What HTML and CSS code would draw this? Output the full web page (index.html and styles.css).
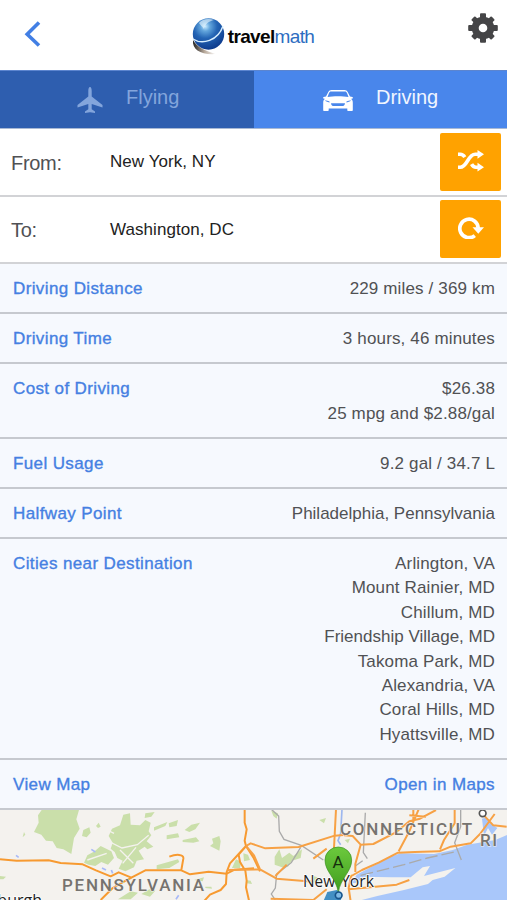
FILE: index.html
```html
<!DOCTYPE html>
<html lang="en">
<head>
<meta charset="utf-8">
<title>Travelmath</title>
<link rel="stylesheet" href="styles.css">
</head>
<body>
<header class="header">
  <svg class="back" viewBox="0 0 18 28"><path d="M15 2.500 3.200 14.200l11.800 11.300" fill="none" stroke="#427fe4" stroke-width="3.600"/></svg>
  <div class="brand">
    <svg class="globe" viewBox="0 0 36 38">
      <defs>
        <radialGradient id="ball" cx=".4" cy=".26" r=".75"><stop offset="0" stop-color="#c5eaff"/><stop offset=".2" stop-color="#62a5dc"/><stop offset=".5" stop-color="#2465b5"/><stop offset="1" stop-color="#0d3a8c"/></radialGradient>
        <linearGradient id="shade"><stop offset="0" stop-color="#222"/><stop offset=".5" stop-color="#b8a99a"/><stop offset="1" stop-color="#fff"/></linearGradient>
      </defs>
      <path d="M2 23C1 33 10 38 25 37 14 34 6 30 2 23Z" fill="url(#shade)"/>
      <circle cx="17.500" cy="17" r="15.700" fill="url(#ball)"/>
      <path d="M2 22c9 6 25 2 30-13" fill="none" stroke="#d7eeff" stroke-width="1.500"/>
      <path d="M8 6c3-4 10-5 15-3-5 1-9 4-10 9-2-3-4-4-5-6Z" fill="#eefaff" opacity=".6"/>
    </svg>
    <span class="name"><b>travel</b>math</span>
  </div>
  <svg class="gear" viewBox="-15 -15 30 30">
    <g fill="#454547"><circle r="11.300"/>
      <rect x="-3" y="-14.800" width="6" height="29.600" rx="1"/><rect x="-14.800" y="-3" width="29.600" height="6" rx="1"/>
      <g transform="rotate(45)"><rect x="-2.700" y="-14.200" width="5.400" height="28.400" rx="1"/><rect x="-14.200" y="-2.700" width="28.400" height="5.400" rx="1"/></g>
    </g><circle r="4.300" fill="#fff"/>
  </svg>
</header>

<nav class="tabs">
  <div class="tab flying">
    <svg class="plane" viewBox="0 0 26 27"><path d="M13 0c1.200 0 1.700 2 1.700 4v5.500L25.500 18v2.400L14.700 17v5.200l3.300 2.300V26l-5-.8L8 26v-1.500l3.300-2.300V17L.5 20.400V18l10.800-8.500V4c0-2 .5-4 1.700-4Z"/></svg>
    <span>Flying</span>
  </div>
  <div class="tab driving">
    <svg class="car" viewBox="0 0 30 21"><path fill="#fff" fill-rule="evenodd" d="M8.500 0h13c1.500 0 2.500.7 3.200 2.100L27 6.500l2.400.5c.8.400.5 1.600-.5 1.700l-.8.100c1.300 1.200 1.700 2.300 1.700 4V20c0 .6-.4 1-1 1h-3.500c-.7 0-1-.4-1-1v-1.400H5.700V20c0 .6-.4 1-1 1H1.200c-.6 0-1-.4-1-1v-7.200c0-1.700.4-2.800 1.700-4l-.8-.1C.1 8.600-.2 7.400.6 7L3 6.500l2.300-4.400C6 .7 7 0 8.500 0ZM8 1.500c-1 0-1.600.6-2 1.500L4.500 7C10 6.100 20 6.100 25.500 7L24 3c-.4-.9-1-1.500-2-1.500ZM1.800 10.500c1.400 1.200 3.100 1.700 5.300 1.800C6 10.800 4 10.100 1.800 10.500Zm26.400 0c-2.200-.4-4.200.3-5.300 1.800 2.200-.1 3.900-.6 5.300-1.800ZM8 13.300c.3 1.800 1 2.600 2 2.600h10c1 0 1.700-.8 2-2.600Z"/></svg>
    <span>Driving</span>
  </div>
</nav>

<section class="trip">
  <div class="place"><span class="key">From:</span><span class="city">New York, NY</span>
    <div class="action"><svg viewBox="0 0 26 22"><g fill="none" stroke="#fff" stroke-width="3.600"><path d="M0 4.200h2.200c2 0 3.600 1.300 4.600 2.900M0 17.200h2.200c7.300 0 7.600-13 15-13H20M13.600 14.200c1 1.900 2.200 3 4.200 3H20"/></g><path fill="#fff" d="M19.500 0 26 4.300l-6.500 4.400ZM19.500 12.700l6.500 4.500-6.500 4.400Z"/></svg></div>
  </div>
  <div class="place"><span class="key">To:</span><span class="city">Washington, DC</span>
    <div class="action"><svg viewBox="0 0 26 22"><path fill="none" stroke="#fff" stroke-width="3.700" d="M16.800 18.600A9.200 9.200 0 1 1 20.200 11"/><path fill="#fff" d="M14.500 10.200H26l-5.700 6.500Z"/></svg></div>
  </div>
</section>

<main class="results">
  <div class="row"><span class="label">Driving Distance</span><span class="value">229 miles / 369 km</span></div>
  <div class="row"><span class="label">Driving Time</span><span class="value">3 hours, 46 minutes</span></div>
  <div class="row"><span class="label">Cost of Driving</span><span class="value">$26.38<br>25 mpg and $2.88/gal</span></div>
  <div class="row"><span class="label">Fuel Usage</span><span class="value">9.2 gal / 34.7 L</span></div>
  <div class="row"><span class="label">Halfway Point</span><span class="value tight">Philadelphia, Pennsylvania</span></div>
  <div class="row"><span class="label">Cities near Destination</span><span class="value">Arlington, VA<br>Mount Rainier, MD<br>Chillum, MD<br><span class="tight">Friendship Village, MD</span><br>Takoma Park, MD<br>Alexandria, VA<br>Coral Hills, MD<br>Hyattsville, MD</span></div>
  <div class="row"><span class="label">View Map</span><span class="label">Open in Maps</span></div>
</main>

<svg class="map" viewBox="0 0 507 90">
  <defs><linearGradient id="pin" x2="0" y2="1"><stop offset="0" stop-color="#6cc93d"/><stop offset="1" stop-color="#3f9d1e"/></linearGradient></defs>
  <rect width="507" height="90" fill="#f4f2ee"/>
  <g transform="translate(0 -70) scale(.33333)">
    <g fill="#cadfaa">
      <path d="M125 210h112l-8 28 10 28-17 28-8 48-24-14-20-4-12-20-20-2-14-18-22-8 14-28-2-22Z"/>
      <path d="m370 224 20-4 2 34 28 2 16-16 16 8-6 26 8 12-14 18 20 16-18 8-8-8-18 12 16 26-22 4-8 20-26 12-20-8 12-24-16-8-8-18-12-10 6-18-12-20 10-22 24-10Z"/>
      <path d="m252 368 10-22 22-12 18-16 32 16 8 20-18 20-20-8-18 12-20-4ZM250 270l18-8 4 16-12 14-14-4ZM288 258l8-10 6 12-8 4ZM436 220l28-4-10 14-20 4ZM462 262l40-16-6 12-34 14ZM506 250l28-10-4 18-22 4ZM500 286l34-6 4 12-38 6ZM554 270l20-16 26-6-14 20-18 8ZM548 300l40-8 10 12-18 4-32-2ZM636 296l22-8 4 16-4 28-28-14 10-8ZM68 292l4-16 4 8ZM470 376l64-18 4 8-30 18-38 4ZM354 478l38-24 22 4-22 20ZM424 462l24-14 18 4-16 18ZM696 384l12-26 16 8-4 18ZM730 340l14 4 6 16-18 4ZM0 408l18 2-8 8H0ZM582 420l30-8-4 12ZM616 440l18 0 2 6-20-2ZM738 420l14 2 4 10-16-2Z"/>
    </g>
    <g fill="none" stroke="#f4f2ee" stroke-width="4"><path d="m318 300 48 24 46-10 34-28M322 270l20 10M368 370l40-48M262 360l58-20M400 370l-40-40"/></g>
    <g fill="none" stroke="#f79a30" stroke-width="6" stroke-linejoin="round">
      <path d="M0 358l50 4 96-1 36 8 66 4 40 18 44 18 24-12 38 16 42-22 108 0 26 12 56-8 54 6 24-12 58-4M508 350c20-8 44-8 42 6l-6 34M302 480l36-36 24-14 34-18"/>
      <path d="M734 208v40l6 20-6 34 4 16-22 24-26 28-10 26-2 36-16 18-32 14-22 24M738 318l-22 26 4 22 16 26 4 30-2 20 10 44M738 318l22 34 20 42"/>
    </g>
    <path d="m274 328 12 8M306 384l12 6M334 390l4 10M48 346l8 6M528 478l8-12" stroke="#a8b9f8" stroke-width="5"/>
  </g>
  <g transform="translate(254 -70) scale(.33333)">
    <path d="M770 280 724 300 640 314 596 330 540 342 440 340 408 350 350 382 308 404 292 430 308 428 328 410 412 412 470 412 506 382 528 378 510 408 604 384 572 410 536 420 522 432 450 450 370 468 308 484H770Z" fill="#a9c7fa"/>
    <path d="m684 236 14-4 12 18 20 14-16 20-12-20-12 24Z" fill="#a9c7fa"/>
    <path d="m208 484 12-28 28-6 16 10-4 24Z" fill="#438fc3"/>
    <g fill="#cadfaa"><path d="m62 350 14-22 8 26 22-16 12 10 26-20-4 26-26 8-12 18-18 2-22-8ZM52 212l20 8-4 16-10-8ZM196 240l20-6-6 16ZM272 300l16-4-6 14ZM178 408l12 4 8 12-18 4Z"/></g>
    <g fill="none" stroke="#aaa" stroke-width="4"><path d="m52 208 22 20 2 46 14 24 52 18 66 44M140 322l-28 46-44 34-4 42-12 18 12 18M334 218l-6 120 12 18M620 208v52l-18 48 20 52M304 378l22-16"/><path d="M320 406 450 374 520 354 610 334" stroke-dasharray="38 12"/></g>
    <path d="m264 208-4 72-8 22 8 12" fill="none" stroke="#9db7ef" stroke-width="5"/>
    <g fill="none" stroke="#f7a144" stroke-width="6" stroke-linejoin="round">
      <path d="m-24 318 14-8 44 15 100-4 108-34 26-2M246 208l-6 116M270 286l26 2 24 26 38-2 66-34 42-34 32-8 48-26M320 314l-16 58 0 24M292 408l32-18 50-22 58-30 50-2 74-2 34-14 60-10 28-28 44-60M434 334l32-60 28-66M478 208v36M466 226l50 4M602 208v42l-32 50-12 28M684 220l34 36 40 4M-24 318 0 346l18 42M-80 390l98-2 50 28 110 9M50 476l128 4 40-32M178 356l40-30M64 408l34-34M292 404l-8 40 6 40M284 448l144-14 38-14"/>
    </g>
    <circle cx="686" cy="220" r="10" fill="#fff" stroke="#555" stroke-width="5"/>
  </g>
  <g class="map-state"><text x="62" y="81" textLength="142">PENNSYLVANIA</text><text x="340" y="25" textLength="132">CONNECTICUT</text><text x="480" y="36" textLength="17">RI</text></g>
  <g class="map-city"><text x="303" y="77" textLength="32" lengthAdjust="spacingAndGlyphs">New</text><text x="341" y="77" textLength="33" lengthAdjust="spacingAndGlyphs">York</text><text x="42" y="96" text-anchor="end">sburgh</text></g>
  <g transform="translate(254 -70) scale(.33333)">
    <path d="M253 458c-6-44-40-62-40-98a40 39 0 0 1 80 0c0 36-34 54-40 98Z" fill="url(#pin)" stroke="#398e20" stroke-width="2"/>
    <circle cx="254" cy="466" r="10" fill="#7ebae4" stroke="#17548b" stroke-width="5"/>
  </g>
  <text class="map-pin" x="338" y="58" text-anchor="middle">A</text>
</svg>
</body>
</html>
```
FILE: styles.css
```css
* { box-sizing: border-box; }
body {
  margin: 0;
  height: 900px;
  overflow: hidden;
  display: flex;
  flex-direction: column;
  background: #fff;
  color: #505154;
  font-family: "Liberation Sans", Arial, sans-serif;
  font-size: 17px;
}
svg { display: block; flex: none; }
.header {
  flex: none;
  height: 70px;
  padding: 13px 9px 0 24px;
  display: flex;
  align-items: flex-start;
  justify-content: space-between;
}
.back { width: 18px; height: 28px; margin-top: 7px; }
.gear { width: 30px; height: 30px; }
.brand { display: flex; align-items: flex-start; margin-left: -5px; margin-top: 4px; }
.globe { width: 36px; height: 38px; }
.name { color: #2d6dc1; font-size: 19px; line-height: 24px; letter-spacing: -.65px; margin: 8px 0 0 1px; }
.name b { color: #050505; }

.tabs {
  flex: none;
  height: 59px;
  display: grid;
  grid-template-columns: 254px 1fr;
  border-top: 1px solid #5c85cf;
  border-bottom: 1px solid #a9b9d4;
  font-size: 20px;
}
.tab { display: flex; align-items: center; }
.tab span { margin-top: -4px; }
.flying { background: #2e5eaf; color: #83a5dc; padding-left: 77px; gap: 23px; }
.driving { background: #4986eb; color: #f0f5ff; padding-left: 69px; gap: 23px; }
.plane { width: 26px; height: 27px; margin-top: 2px; fill: #83a5dc; }
.car { width: 30px; height: 21px; margin-top: 2px; }

.trip { flex: none; }
.place {
  height: 67.500px;
  display: grid;
  grid-template-columns: 99px 1fr 61px;
  align-items: center;
  padding: 0 6px 0 11px;
  border-bottom: 2px solid #d2d3d6;
}
.key { font-size: 20px; margin-top: 3px; letter-spacing: -.3px; }
.city { color: #222; margin-top: 1px; letter-spacing: .06px; }
.action {
  height: 58px;
  display: grid;
  place-items: center;
  background: #ffa200;
  border-radius: 2px;
}
.action svg { width: 26px; height: 22px; margin-top: -2px; }

.results { flex: none; background: #f6f9fe; line-height: 24.450px; }
.row {
  display: flex;
  justify-content: space-between;
  padding: 13px 12px 10.600px 13px;
  border-bottom: 2px solid #c6c9cf;
}
.value { text-align: right; letter-spacing: .15px; }
.tight { letter-spacing: 0; }
.label { color: #4580e2; letter-spacing: .38px; -webkit-text-stroke: .35px #4580e2; }

.map { width: 507px; height: 90px; }
.map-state {
  fill: #76736f;
  stroke: #f4f2ee;
  stroke-width: 1px;
  paint-order: stroke;
  font: 500 17px Roboto, sans-serif;
}
.map-city { fill: #222; stroke: #fff; stroke-width: 1.500px; paint-order: stroke; font: 16px "Open Sans", sans-serif; }
.map-pin { fill: #16300d; font: 17px Roboto, sans-serif; }
```
